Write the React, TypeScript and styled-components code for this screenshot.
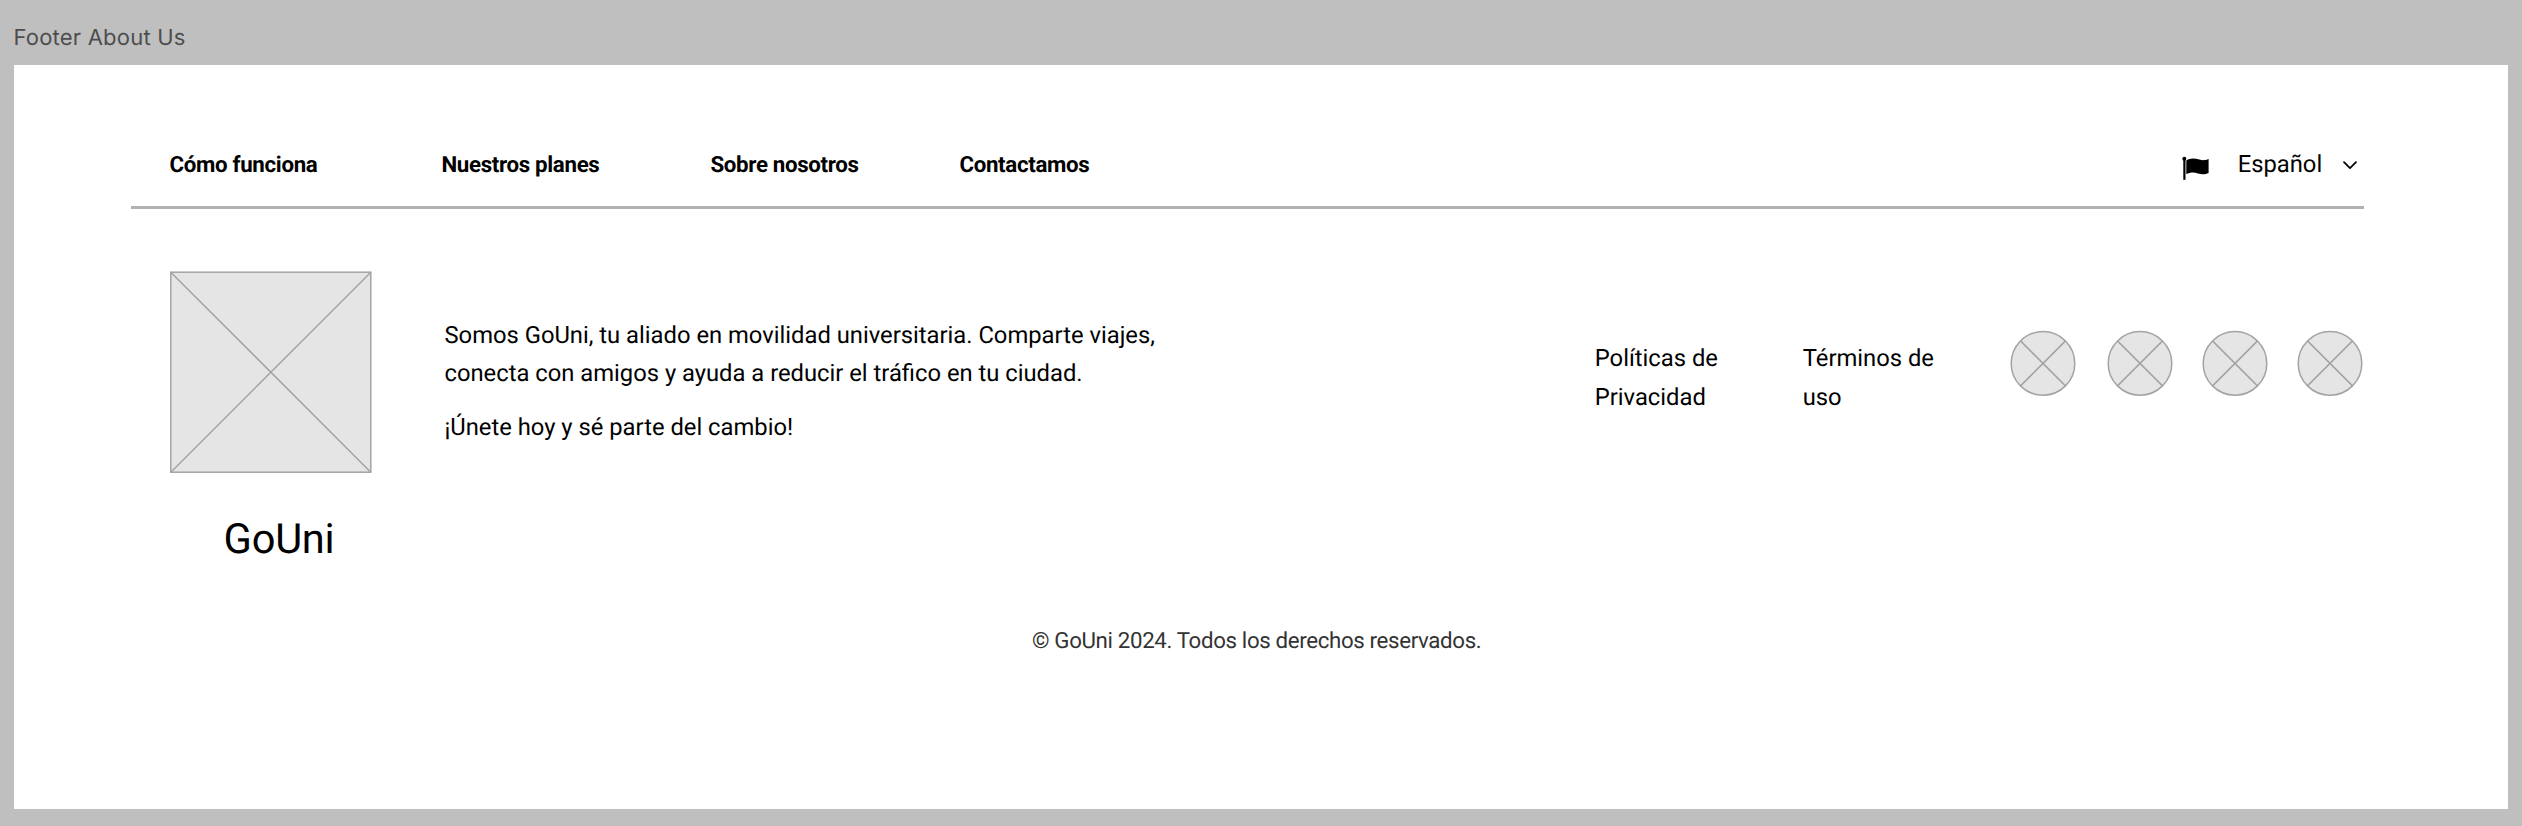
import React from 'react';
import styled, { createGlobalStyle } from 'styled-components';

const GlobalStyle = createGlobalStyle`
  * { box-sizing: border-box; }
  body { margin: 0; background: #bfbfbf; }
`;

const Canvas = styled.main`
  height: 826px;
  padding: 0 14px 17px;
  display: flex;
  flex-direction: column;
  background: #bfbfbf;
  color: #000;
  font-family: Roboto, "Liberation Sans", sans-serif;
  text-rendering: geometricPrecision;
`;

const FrameLabel = styled.div`
  height: 65px;
  padding-top: 23px;
  margin-left: -0.6px;
  font: 400 22px/30px Inter, sans-serif;
  letter-spacing: 0.22px;
  color: #4d4d4d;
`;

const Footer = styled.footer`
  flex: 1;
  padding: 80px 144px 0 117px;
  display: flex;
  flex-direction: column;
  background: #fff;
`;

const TopBar = styled.div`
  height: 64px;
  padding: 0 6.6px 23px 38.6px;
  display: flex;
  align-items: center;
  border-bottom: 3px solid #b2b2b2;
`;

const Nav = styled.nav`
  display: flex;
`;

const NavLink = styled.a<{ $slot: number }>`
  width: ${(p) => p.$slot}px;
  padding-top: 2px;
  font-size: 22.3px;
  font-weight: 700;
  line-height: 38px;
  letter-spacing: -0.33px;
  white-space: nowrap;
`;

const Language = styled.div`
  margin-left: auto;
  display: flex;
  align-items: center;
`;

const FlagIcon = styled.svg`
  width: 28px;
  height: 26px;
  margin-top: 8px;
`;

const ChevronIcon = styled.svg`
  width: 14px;
  height: 10px;
  margin-top: 2px;
`;

const LanguageName = styled.span`
  margin: 0 21.2px 0 27.3px;
  font-size: 23.78px;
  line-height: 38px;
`;

const Content = styled.div`
  height: 378px;
  padding: 62px 1px 0 39px;
  display: flex;
  align-items: flex-start;
`;

const Brand = styled.div`
  width: 202px;
`;

const Logo = styled.svg`
  display: block;
  width: 202px;
  height: 203px;
`;

const BrandName = styled.div`
  margin-top: 41px;
  padding-left: 53.6px;
  font-size: 41.6px;
  line-height: 50px;
  letter-spacing: -0.25px;
`;

const About = styled.div`
  width: 740px;
  margin: 45.4px 0 0 72.5px;
  font-size: 23.78px;
  line-height: 38px;
`;

const Paragraph = styled.p`
  margin: 0 0 16px;
`;

const Legal = styled.div`
  margin: 68.4px 0 0 auto;
  display: flex;
  font-size: 23.78px;
  line-height: 38.65px;
`;

const LegalLink = styled.a<{ $slot: number }>`
  width: ${(p) => p.$slot}px;
`;

const Socials = styled.div`
  margin-top: 59px;
  display: flex;
  gap: 29.2px;
`;

const SocialIcon = styled.svg`
  display: block;
  width: 66px;
  height: 67px;

  &:first-child { margin-right: 1.2px; }
`;

const Copyright = styled.small`
  padding-left: 901px;
  font-size: 22.3px;
  line-height: 38px;
  letter-spacing: -0.36px;
  margin-top: 35px;
  color: #333;
`;

const links = [
  { text: 'Cómo funciona', slot: 271.8 },
  { text: 'Nuestros planes', slot: 269 },
  { text: 'Sobre nosotros', slot: 249 },
  { text: 'Contactamos', slot: 140 },
];

const Flag = () => (
  <FlagIcon viewBox="0 0 28 26">
    <circle cx="2.3" cy="3.7" r="2" />
    <path d="M1.3 4h2.2v20.8H1.3z" />
    <path d="M4.3 5.5C6.5 4.3 8.5 3.6 11 3.6c4.4 0 6.3 1.6 9.8 1.6 2.3 0 4-.4 5.8-1.2v14c-1.8.9-3.7 1.3-5.8 1.3-3.8 0-6-1.9-9.8-1.9-2.6 0-4.6.7-6.7 1.6z" />
  </FlagIcon>
);

const Chevron = () => (
  <ChevronIcon viewBox="0 0 14 10" fill="none" stroke="#000" strokeWidth="1.7" strokeLinecap="round" strokeLinejoin="round">
    <path d="M1 2.2l6 6 6-6" />
  </ChevronIcon>
);

const SocialPlaceholder = () => (
  <SocialIcon viewBox="0 0 66 67" fill="#e5e5e5" stroke="#a3a3a3" strokeWidth="1.49">
    <circle cx="33" cy="33.4" r="31.8" />
    <path d="M10.5 10.9l45 45m0-45l-45 45" />
  </SocialIcon>
);

export default function App() {
  return (
    <>
      <GlobalStyle />
      <Canvas>
        <FrameLabel>Footer About Us</FrameLabel>
        <Footer>
          <TopBar>
            <Nav>
              {links.map((link) => (
                <NavLink key={link.text} $slot={link.slot}>{link.text}</NavLink>
              ))}
            </Nav>
            <Language>
              <Flag />
              <LanguageName>Español</LanguageName>
              <Chevron />
            </Language>
          </TopBar>
          <Content>
            <Brand>
              <Logo viewBox="0 0 202 203" fill="#e5e5e5" stroke="#a3a3a3" strokeWidth="1.49">
                <rect x="0.8" y="1.2" width="200" height="200" />
                <path d="M0.8 1.2l200 200m0-200l-200 200" />
              </Logo>
              <BrandName>GoUni</BrandName>
            </Brand>
            <About>
              <Paragraph>
                Somos GoUni, tu aliado en movilidad universitaria. Comparte viajes,
                <br />
                conecta con amigos y ayuda a reducir el tráfico en tu ciudad.
              </Paragraph>
              <Paragraph>¡Únete hoy y sé parte del cambio!</Paragraph>
            </About>
            <Legal>
              <LegalLink $slot={208}>Políticas de<br />Privacidad</LegalLink>
              <LegalLink $slot={207.5}>Términos de<br />uso</LegalLink>
            </Legal>
            <Socials>
              <SocialPlaceholder />
              <SocialPlaceholder />
              <SocialPlaceholder />
              <SocialPlaceholder />
            </Socials>
          </Content>
          <Copyright>© GoUni 2024. Todos los derechos reservados.</Copyright>
        </Footer>
      </Canvas>
    </>
  );
}
